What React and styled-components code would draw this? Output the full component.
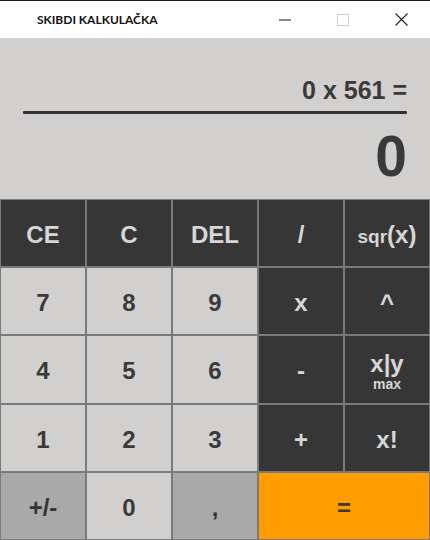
import React from "react";
import styled, { createGlobalStyle, css } from "styled-components";

const Global = createGlobalStyle`
  html, body { margin: 0; padding: 0; background: #ffffff; }
  #root { width: 430px; height: 540px; }
`;

const Window = styled.div`
  width: 430px;
  height: 540px;
  display: flex;
  flex-direction: column;
  box-sizing: border-box;
  border-top: 1px solid #1a1a1a;
  font-family: "Liberation Sans", Arial, sans-serif;
  overflow: hidden;
`;

const TitleBar = styled.div`
  height: 37px;
  flex: none;
  display: flex;
  align-items: center;
  background: #ffffff;
`;

const Title = styled.div`
  flex: 1;
  padding-left: 37px;
  font-family: Lato, "Noto Sans", sans-serif;
  font-weight: 700;
  font-size: 12px;
  color: #111;
`;

const Ctrl = styled.div`
  width: 58px;
  height: 37px;
  display: flex;
  align-items: center;
  justify-content: center;
`;

const Display = styled.div`
  height: 161px;
  flex: none;
  background: #d1d0ce;
  display: flex;
  flex-direction: column;
  padding: 0 23px 0 23px;
  box-sizing: border-box;
`;

const Expr = styled.div`
  margin-top: 38px;
  text-align: right;
  font-weight: 700;
  font-size: 25px;
  line-height: 28px;
  color: #3a3a3a;
`;

const Rule = styled.div`
  height: 3px;
  margin-top: 7px;
  background: #333333;
  border-radius: 1px;
`;

const Result = styled.div`
  text-align: right;
  font-weight: 700;
  font-size: 57px;
  line-height: 60px;
  margin-top: 12px;
  color: #3a3a3a;
`;

const Pad = styled.div`
  flex: 1;
  display: grid;
  grid-template-columns: repeat(5, 1fr);
  grid-template-rows: repeat(5, 1fr);
  background: #7a7a7a;
`;

const tones = {
  dark: css`background: #363636; color: #d6d6d6;`,
  light: css`background: #d1d0ce; color: #3a3a3a;`,
  mid: css`background: #a9a9a9; color: #333333;`,
  orange: css`background: #ff9c00; color: #3a3a3a;`,
};

const Key = styled.div`
  ${(p) => tones[p.$tone]};
  grid-column: span ${(p) => p.$span || 1};
  border: 1px solid #7a7a7a;
  display: flex;
  flex-direction: column;
  align-items: center;
  justify-content: center;
  padding-top: 4px;
  font-weight: 700;
  font-size: 24px;
  line-height: 1;
  user-select: none;
`;

const Small = styled.span`
  font-size: 19px;
`;

const Sub = styled.span`
  font-size: 14px;
  margin-top: 1px;
`;

const keys = [
  ["CE", "dark"], ["C", "dark"], ["DEL", "dark"], ["/", "dark"], ["sqr", "dark"],
  ["7", "light"], ["8", "light"], ["9", "light"], ["x", "dark"], ["^", "dark"],
  ["4", "light"], ["5", "light"], ["6", "light"], ["-", "dark"], ["max", "dark"],
  ["1", "light"], ["2", "light"], ["3", "light"], ["+", "dark"], ["x!", "dark"],
  ["+/-", "mid"], ["0", "light"], [",", "mid"], ["=", "orange", 2],
];

const label = (k) => {
  if (k === "sqr")
    return (
      <span>
        <Small>sqr</Small>(x)
      </span>
    );
  if (k === "max")
    return (
      <>
        <span>x|y</span>
        <Sub>max</Sub>
      </>
    );
  return k;
};

export default function App() {
  return (
    <Window>
      <Global />
      <TitleBar>
        <Title>SKIBDI KALKULAČKA</Title>
        <Ctrl>
          <svg width="12" height="2" viewBox="0 0 12 2">
            <line x1="0" y1="1" x2="12" y2="1" stroke="#111" strokeWidth="1" />
          </svg>
        </Ctrl>
        <Ctrl>
          <svg width="12" height="12" viewBox="0 0 12 12">
            <rect x="0.5" y="0.5" width="11" height="11" fill="none" stroke="#cfcfcf" strokeWidth="1" />
          </svg>
        </Ctrl>
        <Ctrl>
          <svg width="13" height="13" viewBox="0 0 13 13">
            <path d="M0.5 0.5 L12.5 12.5 M12.5 0.5 L0.5 12.5" stroke="#222" strokeWidth="1.1" />
          </svg>
        </Ctrl>
      </TitleBar>
      <Display>
        <Expr>0 x 561 =</Expr>
        <Rule />
        <Result>0</Result>
      </Display>
      <Pad>
        {keys.map(([k, tone, span]) => (
          <Key key={k} $tone={tone} $span={span}>
            {label(k)}
          </Key>
        ))}
      </Pad>
    </Window>
  );
}
